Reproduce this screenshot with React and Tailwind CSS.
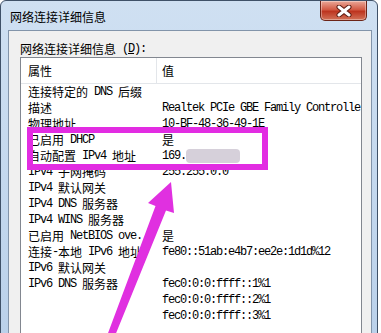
import React from 'react'

const ROWS = [
  ['连接特定的 DNS 后缀', ''],
  ['描述', 'Realtek PCIe GBE Family Controller'],
  ['物理地址', '10-BF-48-36-49-1E'],
  ['已启用 DHCP', '是'],
  ['自动配置 IPv4 地址', '@ip'],
  ['IPv4 子网掩码', '255.255.0.0'],
  ['IPv4 默认网关', ''],
  ['IPv4 DNS 服务器', ''],
  ['IPv4 WINS 服务器', ''],
  ['已启用 NetBIOS ove..', '是'],
  ['连接-本地 IPv6 地址', 'fe80::51ab:e4b7:ee2e:1d1d%12'],
  ['IPv6 默认网关', ''],
  ['IPv6 DNS 服务器', 'fec0:0:0:ffff::1%1'],
  ['', 'fec0:0:0:ffff::2%1'],
  ['', 'fec0:0:0:ffff::3%1'],
]

// SimSun-like: latin runs are 6px per char, CJK runs 12px per char
function Txt({ s }) {
  return s.split(/([\x20-\x7e]+)/).filter(Boolean).map((p, i) =>
    /^[\x20-\x7e]+$/.test(p)
      ? <span key={i} className="font-['Liberation_Mono',monospace] text-[12px] tracking-[-1.2px]">{p}</span>
      : <span key={i} className="font-['Noto_Sans_CJK_SC',sans-serif] text-[12px]">{p}</span>
  )
}

function Value({ v }) {
  if (v === '@ip') {
    return (
      <span className="flex items-center">
        <Txt s="169." />
        <span className="inline-block w-[54px] h-[14px] rounded-[4px] bg-[#d6d0da]" />
      </span>
    )
  }
  return <Txt s={v} />
}

function CloseBtn() {
  return (
    <div className="w-[47px] h-[20px] mr-[5px] flex items-center justify-center rounded-b-[5px] border border-t-0 border-[#6b2418] bg-[linear-gradient(to_bottom,#eaa898,#d25a44_45%,#bd3520_55%,#d27258)] shadow-[inset_0_0_0_1px_rgba(255,255,255,0.35)]">
      <svg width="16" height="12" viewBox="0 0 16 12">
        <path d="M3 2 L13 10 M13 2 L3 10" stroke="#5a1a10" strokeWidth="5" strokeLinecap="round" />
        <path d="M3 2 L13 10 M13 2 L3 10" stroke="#ffffff" strokeWidth="3" strokeLinecap="round" />
      </svg>
    </div>
  )
}

export default function App() {
  return (
    <div className="relative w-[381px] h-[333px] overflow-hidden bg-white">
      {/* window */}
      <div className="w-[378px] h-[360px] flex flex-col border border-[#3f5168] rounded-tl-[6px] rounded-tr-[6px] bg-gradient-to-b from-[#cfe0f2] to-[#b9d0ea] pl-[7px] pr-[5px]">
        <div className="h-[29px] flex justify-between items-start shrink-0">
          <p className="mt-[8px] ml-[2px] text-[12px] leading-[16px] text-black font-['Noto_Sans_CJK_SC',sans-serif]">网络连接详细信息</p>
          <CloseBtn />
        </div>

        {/* client panel */}
        <div className="flex-1 border border-[#8294aa] bg-[#f0f0f0] pl-[11px] pr-[9px] pt-[10px]">
          <p className="h-[16px] leading-[16px] text-black whitespace-pre flex">
            <Txt s="网络连接详细信息 (" /><span className="font-['Liberation_Mono',monospace] text-[12px] tracking-[-1.2px] underline">D</span><Txt s="):" />
          </p>

          <div className="h-[300px] border border-[#828790] bg-white overflow-hidden text-black">
            <div className="h-[26px] flex border-b border-[#e3e6ea]">
              <div className="w-[136px] pl-[7px] flex items-center border-r border-[#e3e6ea]"><Txt s="属性" /></div>
              <div className="pl-[5px] flex items-center"><Txt s="值" /></div>
            </div>
            {ROWS.map(([k, v], i) => (
              <div key={i} className="h-[16px] flex items-center leading-[16px] whitespace-pre">
                <div className="w-[136px] shrink-0 pl-[7px] flex items-center overflow-hidden"><Txt s={k} /></div>
                <div className="pl-[5px] flex items-center whitespace-pre"><Value v={v} /></div>
              </div>
            ))}
          </div>
        </div>
      </div>

      {/* highlight box */}
      <div className="absolute left-[27px] top-[127px] w-[241px] h-[43px] border-[6px] border-[#e22ce2]" />

      {/* arrow */}
      <svg className="absolute left-0 top-0 pointer-events-none" width="381" height="333" viewBox="0 0 381 333">
        <polygon
          points="171,182 174,213 166,210.5 114.5,337 107.3,335 155.5,206 148,203"
          fill="#e030e0"
        />
      </svg>
    </div>
  )
}
